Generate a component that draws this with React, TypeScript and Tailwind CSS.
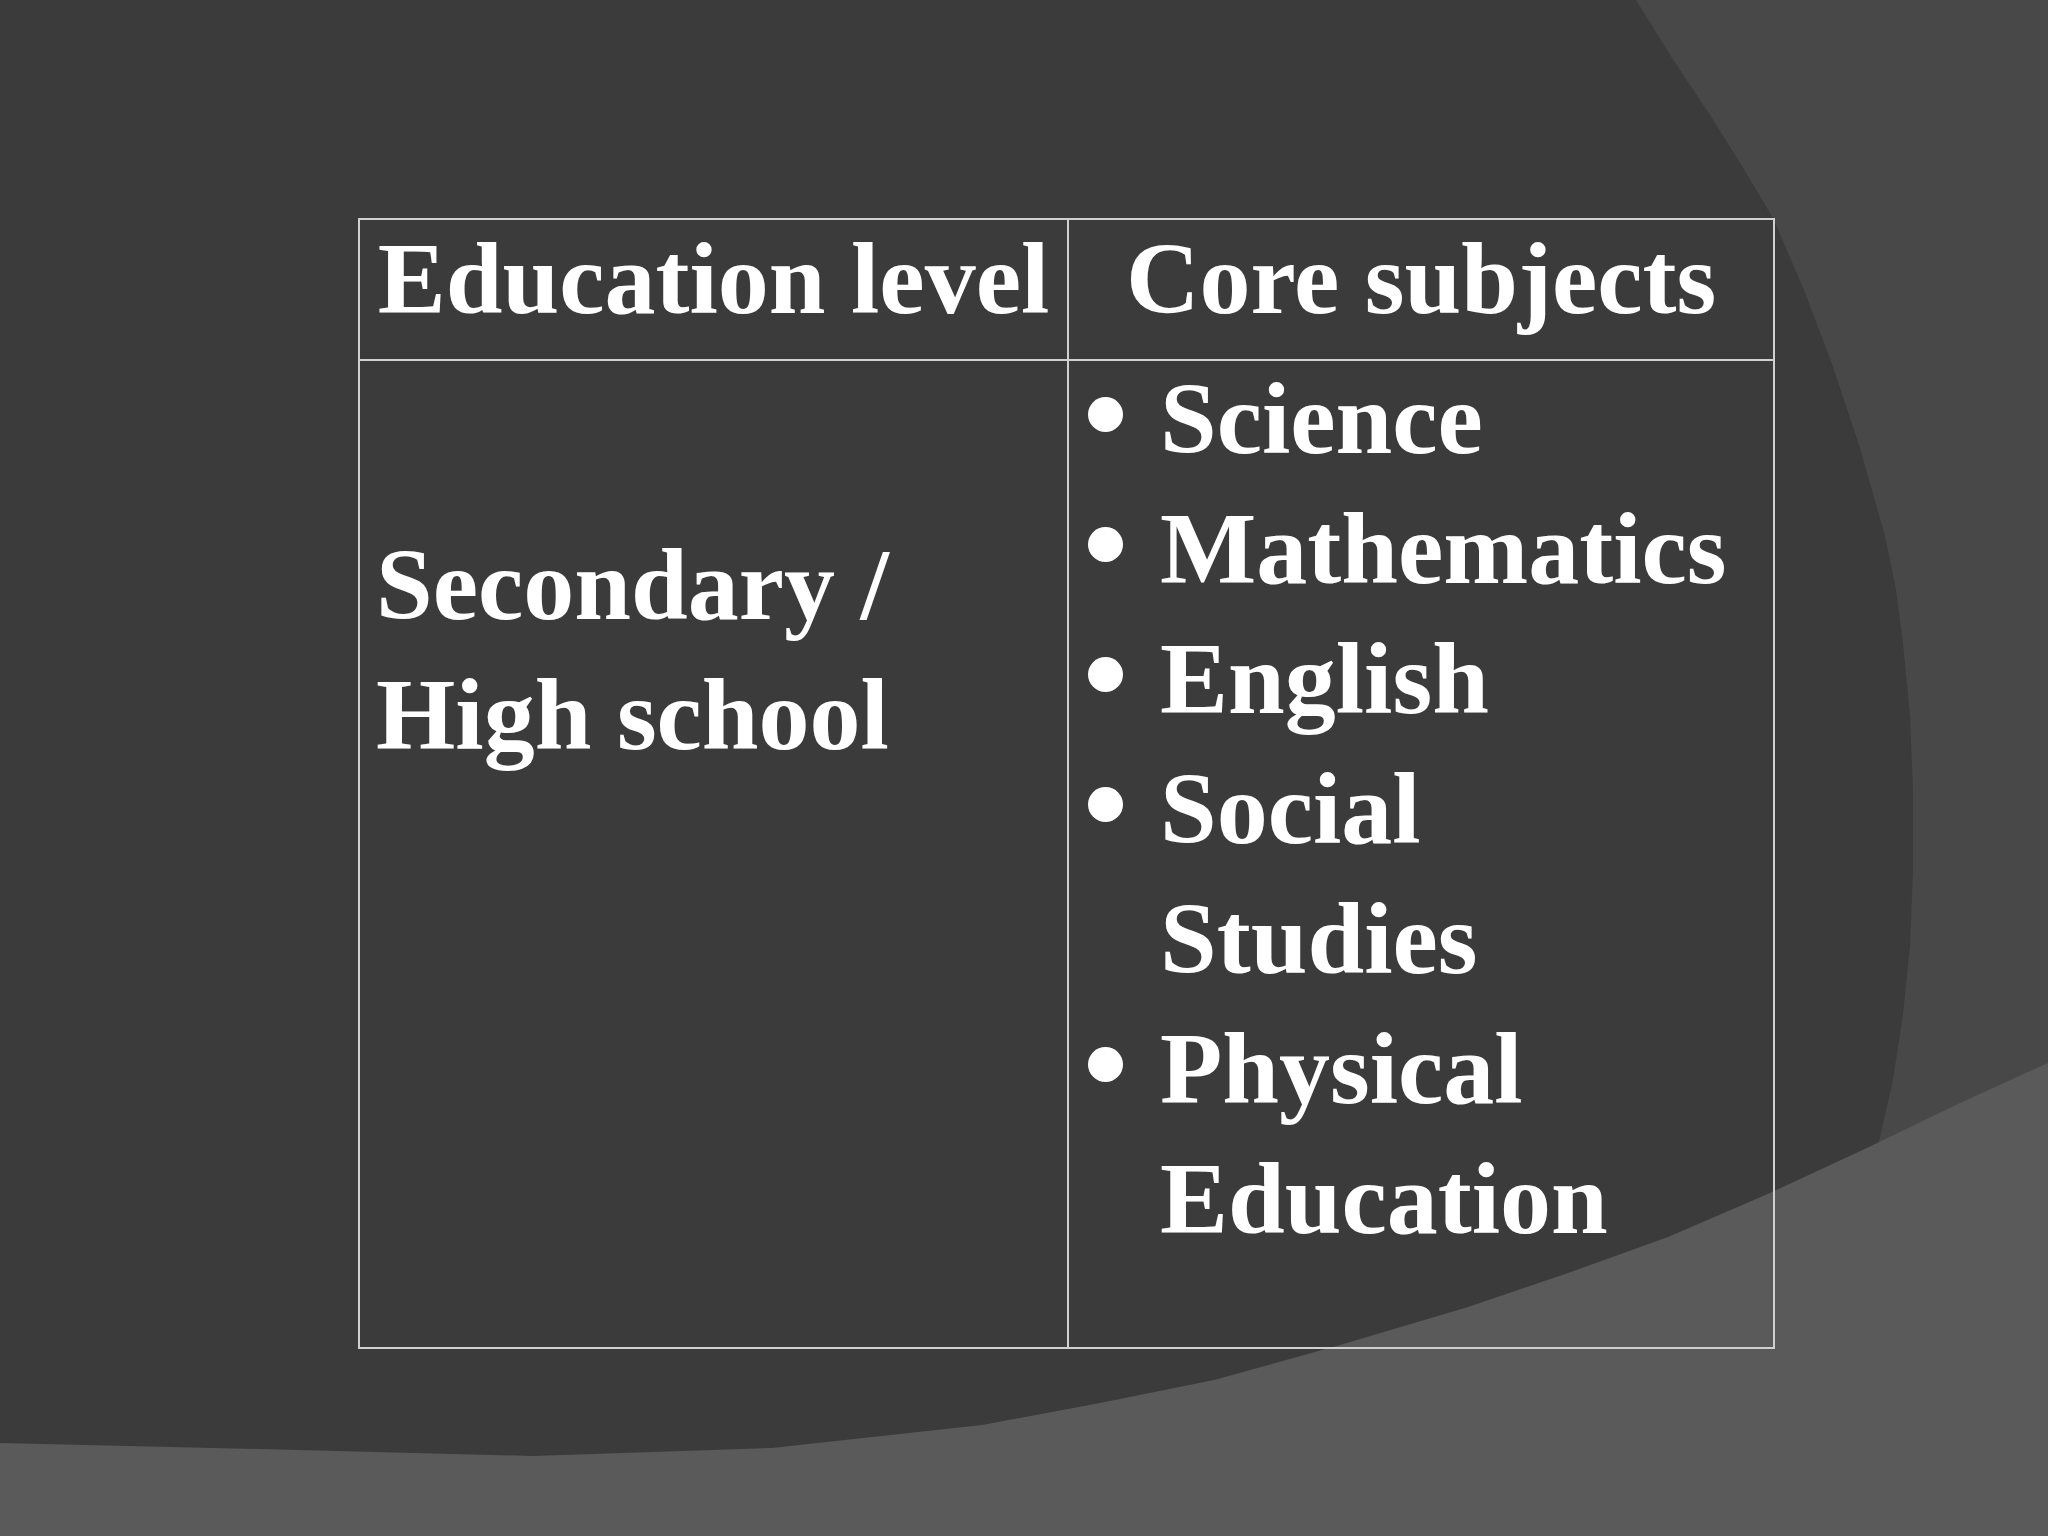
import React from "react";

const subjects = ["Science", "Mathematics", "English", "Social Studies", "Physical Education"];

function Backdrop() {
  return (
    <svg className="absolute inset-0" width="2048" height="1536" viewBox="0 0 2048 1536">
      <polygon
        fill="#484848"
        points="1636,0 1672,58 1710,115 1742,166 1773,218 1804,290 1832,364 1860,448 1885,536 1896,590 1903,643 1910,716 1913,790 1913,870 1910,946 1903,1014 1893,1080 1877,1150 1862,1260 2048,1260 2048,0"
      />
      <polygon
        fill="#5a5a5a"
        points="0,1443 260,1449 533,1456 772,1448 982,1425 1100,1403 1214,1380 1340,1345 1468,1307 1568,1273 1668,1237 1770,1193 1869,1147 1960,1103 2048,1063 2048,1536 0,1536"
      />
    </svg>
  );
}

export default function App() {
  return (
    <div className="relative h-[1536px] w-[2048px] overflow-hidden bg-[#3b3b3b]">
      <Backdrop />

      <div className="relative pl-[358px] pt-[218px] font-['Liberation_Serif','Times_New_Roman',serif] text-[102px] font-bold text-white">
        <div className="grid h-[1131px] w-[1417px] grid-cols-[709px_704px] grid-rows-[141px_986px] border-2 border-[#d0d0d0]">
          <div className="border-b-2 border-r-2 border-[#d0d0d0] pt-[8px] text-center leading-[102px] whitespace-nowrap">
            Education level
          </div>
          <div className="border-b-2 border-[#d0d0d0] pt-[8px] text-center leading-[102px] whitespace-nowrap">
            Core subjects
          </div>

          <div className="border-r-2 border-[#d0d0d0] pl-[16px] pt-[159px] leading-[130px]">
            Secondary /
            <br />
            High school
          </div>
          <div className="pl-[19px] pr-[30px]">
            <ul className="-mt-[7px]">
              {subjects.map((s) => (
                <li key={s} className="flex items-start">
                  <span className="h-[130px] w-[72px] flex-none">
                    <span className="mt-[43px] block h-[35px] w-[35px] rounded-full bg-white" />
                  </span>
                  <span className="min-w-0 flex-1 leading-[130px]">{s}</span>
                </li>
              ))}
            </ul>
          </div>
        </div>
      </div>
    </div>
  );
}
